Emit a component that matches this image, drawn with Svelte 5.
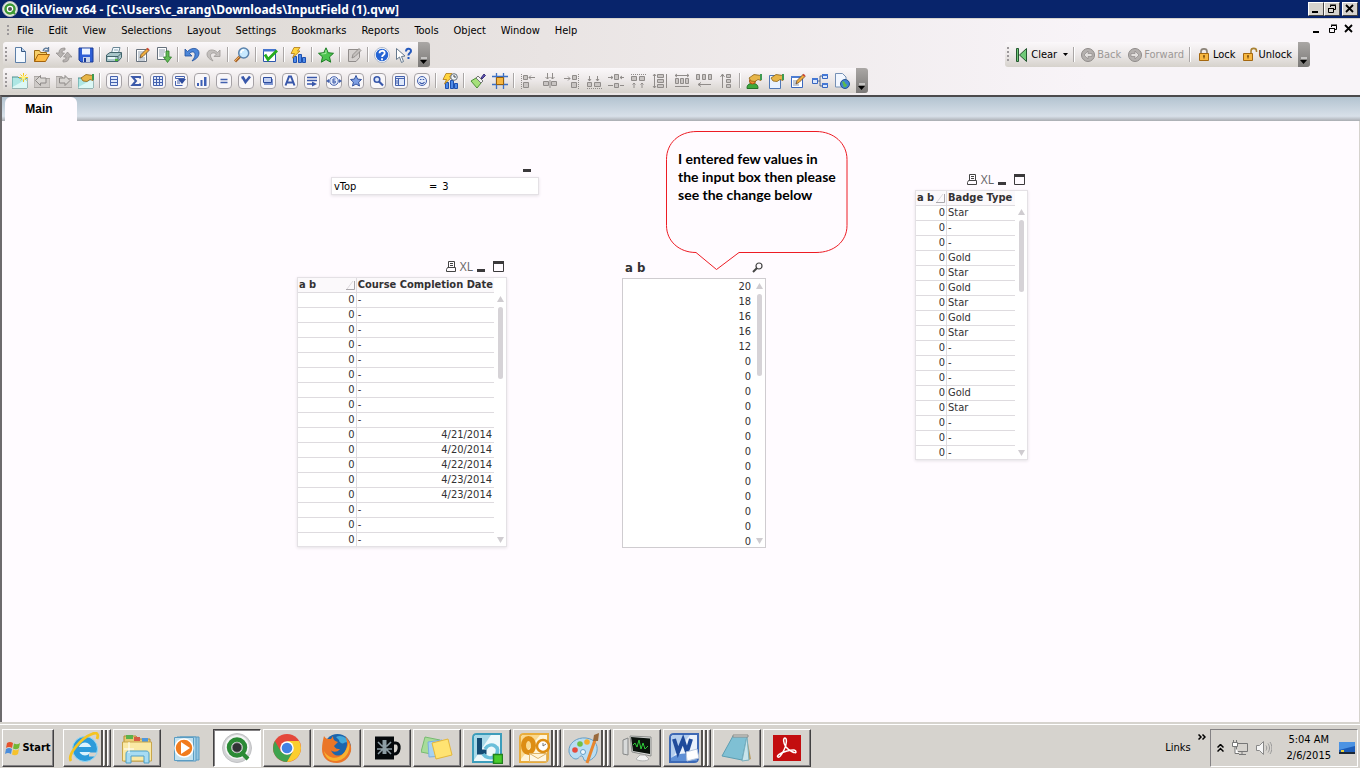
<script>
    const menus = ['File', 'Edit', 'View', 'Selections', 'Layout', 'Settings', 'Bookmarks', 'Reports', 'Tools', 'Object', 'Window', 'Help'];

    // '|' is a separator
    const standardBar = ['new', 'open', 'reload', 'save', '|', 'print', '|', 'script', 'export', '|', 'undo', 'redo', '|', 'search', '|', 'check', '|', 'quickChart', '|', 'star', '|', 'note', '|', 'help', 'whatsThis'];
    const designBar = ['addSheet', 'sheetLeft', 'sheetRight', 'sheetProps', '|',
        'listBox', 'statistics', 'table', 'multiBox', 'chart', 'inputBox', 'selections', 'button', 'text', 'line', 'slider', 'bookmark', 'searchObject', 'container', 'custom', '|',
        'chartWizard', '|', 'painter', 'grid', '|',
        'alignLeft', 'centerH', 'alignRight', 'alignBottom', 'centerV', 'alignTop', 'spaceV', 'spaceH', 'adjustLeft', 'adjustTop', '|',
        'userPrefs', 'docProps', 'editSheet', 'tableViewer', 'webView'];
    const disabled = ['reload', 'redo', 'note', 'sheetLeft', 'sheetRight', 'alignLeft', 'centerH', 'alignRight', 'alignBottom', 'centerV', 'alignTop', 'spaceV', 'spaceH', 'adjustLeft', 'adjustTop'];

    const frame = (inner) => `<rect x=".5" y=".5" width="15" height="15" rx="3.5" fill="#f8f6f8" stroke="#a5a1a5"/>${inner}`;
    const grey = (inner) => `<g fill="#c9c5c3" stroke="#908c8a">${inner}</g>`;
    const bars = '<path d="M3.500 9.500h3v6h-3zM8.500 7.500h3v8h-3zM12.500 10.500h3v5h-3z" fill="#4d8ae8" stroke="#1d4fae"/>';
    const bolt = '<path d="M4 .5h6L7.500 4H10L2.500 11 4.500 6.500H1z" fill="#ffd43e" stroke="#b07a14" stroke-width=".8"/>';
    const hand = '<path d="M3 5 8 1.500l7 1v5l-3-1-3 2-4-.5z" fill="#e7b548" stroke="#8d6314" stroke-width=".8"/><path d="M14 1h2v6h-2z" fill="#3f9a52"/>';
    const pencil = '<path d="m6 11 1-3.500L13 1.500l2 2L9 9.500z" fill="#f0ad3c" stroke="#6a4b2b" stroke-width=".8"/><path d="m12.500 2 1-1.200 2 1.800-1.200 1.200z" fill="#cf4436"/>';

    const icons = {
        new: '<path d="M3.500.5h6l4 4v11h-10z" fill="#f4f9ff" stroke="#5c7fa8"/><path d="M9.500.5v4h4" fill="#b9d2ee" stroke="#34557f"/>',
        open: '<path d="M.5 14.500v-11h5l1 2h6v3" fill="#f6cf6a" stroke="#9c6b14"/><path d="M.5 14.500 4 7.500h11.500l-4 7z" fill="#fdbb45" stroke="#a4630b"/><path d="M9 4c1-3 3-3.500 5-2M14.500 0v4h-4" fill="none" stroke="#5b7899" stroke-width="1.300"/>',
        reload: '<path d="M9 1C4 1 3 3 3 6H0l4.500 4.500L8.500 6H6c0-2 1-3 3-3zM7 15c5 0 6-2 6-5h3l-4.500-5L7.500 10H10c0 2-1 3-3 3z" fill="#b7b3b1" stroke="#918d8b" stroke-width=".7"/>',
        save: '<path d="M1 1h14v14H3l-2-2z" fill="#2f5fd6" stroke="#1b3a94"/><path d="M4 1.500h8v6H4z" fill="#eef4ff"/><path d="M5 10h7v5H5z" fill="#c8d3e8"/><path d="M6 11h2v4H6z" fill="#1b3a94"/>',
        print: '<path d="M5.500 6 7 .5h7L12.500 6" fill="#f5fbff" stroke="#6b8796"/><path d="M8 3h4" stroke="#91a9b8"/><path d="M.5 8 4 5.500h11.500v5L12 14.500H.5z" fill="#a9c5c9" stroke="#42646c"/><path d="M.5 9.500H12V14M12 9.500l3.500-3.500" fill="none" stroke="#42646c"/><path d="M2 11h7" stroke="#e9f6f6" stroke-width="2"/><path d="M9 13h3" stroke="#4cb338" stroke-width="2"/>',
        script: '<path d="M2.500 2.500h10v12h-10z" fill="#fff" stroke="#66717d"/><path d="M4 5h6M4 7h5M4 9h4M4 11h7M4 13h7" stroke="#75859a" stroke-width=".8"/>' + pencil,
        export: '<path d="M1.500.5h9v12h-9z" fill="#fff" stroke="#66717d"/><path d="M3 3h6M3 5h6M3 7h5M3 9h5" stroke="#75859a" stroke-width=".8"/><path d="M10 4h3v6h2.500l-4 5.500-4-5.500H10z" fill="#62bb55" stroke="#2e7c2a" stroke-width=".8"/>',
        undo: '<path d="M1 2v7h7L5.500 6.500C8 4 11 4.500 11 7.500c0 2.500-1 4-3 6.500 5-2 7-5 7-8 0-5-7-6.500-11.500-1.500z" fill="#4c86d8" stroke="#1e4f9e" stroke-width=".8"/>',
        redo: '<path d="M14 3v6.500H8L10.500 7C7.500 5 4.500 6 4.500 8.500c0 2 1 3 2.500 5.500-4-2-6-4-6-7 0-4 6-6 10.500-1.500z" fill="#c3bfbd" stroke="#9c9896" stroke-width=".8"/>',
        search: '<path d="m1 14.500 6-6" stroke="#a8642a" stroke-width="3"/><path d="m1 14 6-6" stroke="#f0b25c"/><circle cx="9.700" cy="6" r="5" fill="#c8e9ff" stroke="#5b83ad" stroke-width="1.500"/><path d="M7 6c0-2 1-3 3-3" stroke="#fff" stroke-width="1.500" fill="none"/>',
        check: '<path d="M1.500 2.500h12v12h-12z" fill="#fff" stroke="#2d56ac"/><path d="M1 2h13v2.500H1z" fill="#4675cf"/><path d="m3 7.500 3 5 9-9" fill="none" stroke="#26ac1d" stroke-width="2.800"/>',
        quickChart: bars + bolt,
        star: '<path d="m8 .8 2.200 4.900 5.300.6-4 3.600 1.200 5.300L8 12.500l-4.700 2.700L4.500 9.900l-4-3.600 5.300-.6z" fill="#4cc34e" stroke="#1c7d24"/><path d="M8 3v3.500L3.500 7" fill="none" stroke="#a5eba0"/>',
        note: '<path d="M2.500 2.500h11v8l-3.500 4H2.500z" fill="#d4d0ce" stroke="#918d8b"/><path d="m6 11 1-3.500 6-6 2 2-6 6z" fill="#c4c0be" stroke="#85817f" stroke-width=".8"/>',
        help: '<circle cx="8" cy="8" r="7" fill="#2564d4" stroke="#fff" stroke-width="1.500"/><circle cx="8" cy="8" r="7.500" fill="none" stroke="#7a8ba8" stroke-width=".6"/><path d="M5.500 6.200C5.500 3 10.700 3 10.700 6c0 2-2.600 2-2.600 4M8 11.200v2" fill="none" stroke="#fff" stroke-width="1.800"/>',
        whatsThis: '<path d="M.5 1.500v11l3-2.500 2 5.500 2-1-2-5 3.500-.5z" fill="#fff" stroke="#65788e"/><path d="M10 4.500C10 1 15 1 15 4c0 2-2.600 2-2.600 4.500M12.500 10v2" fill="none" stroke="#2458bd" stroke-width="2"/>',
        addSheet: '<path d="M0 4h6l1 1h8v10H0z" fill="#aee7e4" stroke="#51908f"/><path d="M.5 14 15 6v9H.5z" fill="#dcf8f5"/><path d="M11.500 0v9M7 4.500h9M8.500 1.500l6 6M14.500 1.500l-6 6" stroke="#f5c81c"/><circle cx="11.500" cy="4.500" r="2" fill="#fff27e"/>',
        sheetLeft: '<path d="M0 3.500h6l1 2h9v9H0z" fill="#cfcbc8" stroke="#aaa6a3"/><path d="m1.500 7.500 5-5V5H12v5H6.500v2.500z" fill="#d9d6d3" stroke="#8d8987"/>',
        sheetRight: '<path d="M0 3.500h6l1 2h9v9H0z" fill="#cfcbc8" stroke="#aaa6a3"/><path d="m14 7.500-5-5V5H3.500v5H9v2.500z" fill="#d9d6d3" stroke="#8d8987"/>',
        sheetProps: '<path d="M0 5h15v10H0z" fill="#aee7e4" stroke="#51908f"/><path d="M.5 14 15 6v9H.5z" fill="#dcf8f5"/>' + hand,
        listBox: frame('<path d="M4.500 3.500h7v9h-7zM4 6.500h8M4 9.500h8" fill="#dfe8fa" stroke="#4562ae"/>'),
        statistics: frame('<path d="M12 5.500V4H4.500L8 8l-3.500 4H12v-1.500" fill="none" stroke="#3c5aaa" stroke-width="2"/>'),
        table: frame('<path d="M3.500 3.500h9v9h-9zM3 6.500h10M3 9.500h10M6.500 3v10M9.500 3v10" fill="#dfe8fa" stroke="#4562ae"/>'),
        multiBox: frame('<path d="M3.500 3.500h9v2h-9zM3.500 8v4.500h7M5 8h3M5 10h3" fill="none" stroke="#4562ae"/><path d="M6 6h8l-4 5z" fill="#2e4c9e"/>'),
        chart: frame('<path d="M3 10h2v3H3zM6.500 7h2v6h-2zM10 4h2.500v9H10z" fill="#3f60b5"/>'),
        inputBox: frame('<path d="M4.500 6.500h7M4.500 9.500h7" stroke="#4260ae" stroke-width="1.600"/>'),
        selections: frame('<path d="M3.500 5 5 4.500 7.500 9 12 3.500" fill="none" stroke="#3857aa" stroke-width="2.600"/>'),
        button: frame('<path d="M4 6h9v6H4z" fill="#7f97d2"/><path d="M3.500 4.500h8v5h-8z" fill="#c5d2f2" stroke="#2e4c9e"/>'),
        text: frame('<path d="M3.500 12.500 7 3.500h2l3.500 9M5 9.500h6" fill="none" stroke="#3857aa" stroke-width="2"/>'),
        line: frame('<path d="M3 4.500h10M3 7.500h10M3 11h6" stroke="#3857aa" stroke-width="1.300"/><path d="m8 8.500 5 2.500-5 2.500z" fill="#3857aa"/>'),
        slider: frame('<circle cx="8" cy="8" r="4.300" fill="#e4ebfa" stroke="#4562ae"/><path d="M0 8l3-2v4zM16 8l-3-2v4z" fill="#4562ae"/><path d="M9.500 6H7v4h2.200V8H7" fill="none" stroke="#3857aa"/>'),
        bookmark: frame('<path d="m8 2.500 1.600 3.600 3.900.4-2.900 2.600.9 3.900L8 11l-3.500 2 .9-3.900-2.900-2.600 3.900-.4z" fill="#7fa0e4" stroke="#35549f"/>'),
        searchObject: frame('<circle cx="7" cy="6.500" r="2.800" fill="#dfe8fa" stroke="#3857aa" stroke-width="1.600"/><path d="m9 8.500 4 4" stroke="#3857aa" stroke-width="2.200"/>'),
        container: frame('<path d="M3.500 3.500h9v9h-9zM3 5.500h10M6.500 5v8M4 8h2M4 10h2" fill="#dfe8fa" stroke="#4562ae"/>'),
        custom: frame('<circle cx="8" cy="8" r="4.500" fill="#e4ebfa" stroke="#4562ae"/><path d="M6 6.500h1.500M8.700 6.500h1.500M5.500 9c1.500 2.200 3.500 2.200 5 0" fill="none" stroke="#3857aa" stroke-width="1.200"/>'),
        chartWizard: bars + bolt + '<circle cx="12" cy="4" r="3.300" fill="#eef4fa" stroke="#68727c"/><path d="M12 2v2h2" fill="none" stroke="#444"/>',
        painter: '<path d="m1 8 5-3 5 5-4 5z" fill="#a6e07a" stroke="#4d9036"/><path d="m6 5 2-2 5 5-2 2z" fill="#f2f2f2" stroke="#777"/><path d="m11 5 3-4 1.500 1.500L12 6z" fill="#5d4fb0" stroke="#3b3379"/>',
        grid: '<path d="M4.500 0v16M11.500 0v16M0 3.500h16M0 11.500h16" stroke="#3b6fc4" stroke-width="1.300"/><path d="M4.500 4.500h7v7h-7z" fill="#f7b740" stroke="#965f0d"/>',
        alignLeft: grey('<path d="M1.500 1v15" stroke-dasharray="1 1"/><path d="M3.500 2.500h4v4h-4zM3.500 9.500h5v5h-5z"/><path d="M9 4.500h6M11 2.500 9 4.500l2 2" fill="none"/>'),
        centerH: grey('<path d="M1.500 8.500h5v4h-5zM9.500 8.500h5v4h-5z"/><path d="M5.500 0v6M10.500 0v6M3.500 4l2 2 2-2M8.500 4l2 2 2-2M8 7v8" fill="none"/>'),
        alignRight: grey('<path d="M14.500 1v15" stroke-dasharray="1 1"/><path d="M8.500 2.500h4v4h-4zM7.500 9.500h5v5h-5z"/><path d="M0 5.500h6M4 3.500l2 2-2 2" fill="none"/>'),
        alignBottom: grey('<path d="M1 15.500h15" stroke-dasharray="1 1"/><path d="M1.500 9.500h4v4h-4zM8.500 9.500h6v4h-6z"/><path d="M3.500 3v5M11.500 3v5M2 6l1.500 2L5 6M10 6l1.500 2L13 6" fill="none"/>'),
        centerV: grey('<path d="M6.500 1.500h4v5h-4zM6.500 10.500h4v4h-4z"/><path d="M0 4.500h5M3 3l2 1.500L3 6M16 4.500h-4M14 3l-2 1.500L14 6M0 12.500h5M16 12.500h-4" fill="none"/>'),
        alignTop: grey('<path d="M1 1.500h15" stroke-dasharray="1 1"/><path d="M1.500 3.500h5v4h-5zM9.500 3.500h5v4h-5z"/><path d="M4 15v-5M12 15v-5M2.500 11.500 4 10l1.500 1.500M10.500 11.500 12 10l1.500 1.500" fill="none"/>'),
        spaceV: grey('<path d="M5.500 1.500h6v3h-6zM5.500 6.500h6v3h-6zM5.500 11.500h6v3h-6z"/><path d="M2.500 1v14M14.500 1v14M1 3l1.500-2L4 3M1 13l1.500 2L4 13" fill="none"/>'),
        spaceH: grey('<path d="M1.500 5.500h3v5h-3zM6.500 5.500h3v5h-3zM11.500 5.500h3v5h-3z"/><path d="M1 2.500h14M1 13.500h14M3 1 1 2.500 3 4M13 1l2 1.500L13 4" fill="none"/>'),
        adjustLeft: grey('<path d="M.5 1.500h3v5h-3zM6.500 1.500h3v5h-3zM12.500 1.500h3v5h-3z"/><path d="M2 11.500h13M5 9.500l-3 2 3 2" fill="none"/>'),
        adjustTop: grey('<path d="M8.500 1.500h4v3h-4zM8.500 6.500h4v3h-4zM8.500 11.500h4v3h-4z"/><path d="M4.500 15V1M2.500 4l2-3 2 3" fill="none"/>'),
        userPrefs: '<path d="M1 15.500c0-4 2-5 5.500-5s5.500 1 5.500 5z" fill="#3fa93c" stroke="#23722a"/><circle cx="6.500" cy="8" r="3" fill="#f08a34" stroke="#a6530f"/>' + hand,
        docProps: '<path d="M1.500 2.500h11v13h-11z" fill="#e8f2ff" stroke="#5078b5"/>' + hand,
        editSheet: '<path d="M1.500 3.500h11v11h-11z" fill="#fff" stroke="#3a68bd"/><path d="M1 3h12v2H1z" fill="#4c7dd2"/><path d="M3 8h5M3 10h4M3 12h6" stroke="#8796ad"/>' + pencil,
        tableViewer: '<path d="M5 8h3V3h3M8 8v5h3" fill="none" stroke="#55698a"/><path d="M.5 5.500h5v5h-5zM10.500 1.500h5v4h-5zM10.500 10.500h5v4h-5z" fill="#d9e7ff" stroke="#3766bf"/><path d="M0 5h6v2H0zM10 1h6v2h-6zM10 10h6v2h-6z" fill="#4578d4"/>',
        webView: '<path d="M1.500.5h7l3.500 3.500v10H1.500z" fill="#f2f7ff" stroke="#7590b5"/><circle cx="11" cy="11" r="4.500" fill="#3f83d3" stroke="#265590"/><path d="M8 9c2-2 3 0 3 1s2 1 2 2-2 3-3 2 0-2-2-5z" fill="#5cba4c"/>',
        clear: '<path d="M2.500 1.500h2v13h-2zM12.500 1.500v13L5.500 8z" fill="#70c978" stroke="#23562f"/>',
        back: '<circle cx="8" cy="8" r="6.500" fill="#b4b0ae" stroke="#8f8b89"/><path d="m4 8 4-4v2.500h4v3H8V12z" fill="#e2dfdd" stroke="#8f8b89" stroke-width=".7"/>',
        forward: '<circle cx="8" cy="8" r="6.500" fill="#b4b0ae" stroke="#8f8b89"/><path d="M12 8 8 4v2.500H4v3h4V12z" fill="#e2dfdd" stroke="#8f8b89" stroke-width=".7"/>',
        lock: '<path d="M5 7V4.500c0-3.500 6-3.500 6 0V7" fill="none" stroke="#8b8378" stroke-width="1.700"/><path d="M3.500 6.500h9v7h-9z" fill="#f7b740" stroke="#a4670f"/><path d="M8 8.500v3M7 9h2" stroke="#6b3f05"/>',
        unlock: '<path d="M9 7V4c0-3.500 5.500-3.500 5.500 0v1" fill="none" stroke="#a98232" stroke-width="1.600"/><path d="M1.500 6.500h9v7h-9z" fill="#f7b740" stroke="#a4670f"/><path d="M6 8.500v3M5 9h2" stroke="#6b3f05"/>',
        qlik: '<circle cx="8" cy="8" r="7.500" fill="#e9ebe9" stroke="#b8bcb8"/><circle cx="8" cy="8" r="4.500" fill="#fff" stroke="#3d9b35" stroke-width="2.500"/><path d="m10 10 3 3" stroke="#3d9b35" stroke-width="2"/><circle cx="8" cy="8" r="2" fill="#555"/>'
    };

    const apps = [
        { name: 'Internet Explorer', stack: true, icon: '<circle cx="17" cy="17" r="9.500" fill="#d9f2fd" stroke="#2c9bda" stroke-width="6"/><path d="M9 17.500h20" stroke="#2c9bda" stroke-width="5"/><path d="M21 20.500h10v4h-10z" fill="#d5d2cc"/><circle cx="17" cy="17" r="12.500" fill="none" stroke="#8fd7f7" stroke-width="1"/><path d="M3 29C-1 23 13 6 24 2c5-2 7 0 5 5" fill="none" stroke="#f5c421" stroke-width="2.800"/>' },
        { name: 'Windows Explorer', icon: '<path d="M3 4h12l2 3h12v22H3z" fill="#e9ca72" stroke="#b08c35"/><path d="M5 3h7v4H5z" fill="#5bb24d"/><path d="M13 5h6v4h-6z" fill="#d75b45"/><path d="M21 6h6v4h-6z" fill="#4f97dc"/><path d="M1.500 10h29v19h-29z" fill="#fae9a5" stroke="#c8a64b"/><path d="M5 31V22c0-2 1-3 3-3h17c2 0 3 1 3 3v9h-5v-7H10v7z" fill="#a7dcf3" stroke="#4f9fc6"/><path d="M8 10v11M3 17h10" stroke="#fff"/>' },
        { name: 'Media Player', flat: true, icon: '<path d="M9 5h19v23H9z" fill="#91c3df" stroke="#5a9cc3"/><path d="M6 5h19v24H6z" fill="#aad4ea" stroke="#5a9cc3"/><path d="M3.500 5.500h19v23h-19z" fill="#c5e2ef" stroke="#5a9cc3"/><circle cx="13" cy="16" r="9" fill="#f17b1d" stroke="#fff" stroke-width="1.500"/><path d="m10 10 9 6-9 6z" fill="#fff"/>' },
        { name: 'QlikView', active: true, icon: '<circle cx="16" cy="16" r="14.500" fill="#d2d3d5" stroke="#c1c2c4"/><circle cx="16" cy="15" r="12" fill="#f4f5f5"/><circle cx="16" cy="15.500" r="8" fill="#f3f5f3" stroke="#2a8a35" stroke-width="4.500"/><path d="m20 20 7 7" stroke="#2a8a35" stroke-width="4"/><circle cx="16" cy="15.500" r="4.800" fill="#303235" stroke="#8b8e90"/>' },
        { name: 'Chrome', icon: '<circle cx="16" cy="16" r="14" fill="#e4483b"/><path d="M3.900 9A14 14 0 0 0 16 30l6-10.500-6 3.500-6.100-3.500z" fill="#3fa34e"/><path d="M16 30A14 14 0 0 0 28.100 9H16l6 10.500z" fill="#fbce2e"/><circle cx="16" cy="16" r="6.800" fill="#fff"/><circle cx="16" cy="16" r="5.300" fill="#4282e4"/>' },
        { name: 'Firefox', icon: '<circle cx="16.500" cy="15.500" r="13.500" fill="#1c65ad"/><path d="M15 5c5-3 12 1 13 6-2-1-4-1-5 0s-5 0-5-3z" fill="#42a8db"/><path d="M3 4c2 3 3 3 7 3l2-3c0 3 1 5 5 6l-4 4c2 3 3 3 6 3-3 4-8 3-9 1 2 7 12 8 15-1 2-5 1-9-1-13 4 4 7 9 6 15-2 8-8 12-14 12C6 31 1 25 1 17c0-5 1-9 2-13z" fill="#eb7628"/><path d="M28 10c2 10-4 19-14 19C8 29 4 25 3 19c4 8 19 13 25-9z" fill="#f8b230"/>' },
        { name: 'Toad', icon: '<path d="M4 4.500h19v23H4z" fill="#05090c"/><path d="M23 11h2c5 0 4 11-2 11" fill="none" stroke="#05090c" stroke-width="3"/><path d="M13.500 8v14" stroke="#8d9da5" stroke-width="4"/><path d="m7 10 4 4h5l4-4M6 17h15M7 22l4-4h5l4 4" fill="none" stroke="#8d9da5" stroke-width="1.600"/>' },
        { name: 'Sticky Notes', icon: '<path d="m4 5 15 3-4 15-15-3z" fill="#a7dc9a" stroke="#78bb71"/><path d="m7 10 14-2 2 16-15 1z" fill="#a5d2f4" stroke="#7cafe0"/><path d="m11 11 16-4 4 16-16 4z" fill="#ffe372" stroke="#e4b73b"/>' },
        { name: 'Lync', icon: '<path d="M2 6c0-3 1-4 4-4h24v24c0 3-1 4-4 4H2z" fill="#eef9fb" stroke="#3c9dbb" stroke-width="2"/><path d="M3 6c0-2 1-3 3-3h14L3 28z" fill="#a8d9e8"/><path d="M8.500 6v14h7" fill="none" stroke="#134b73" stroke-width="5"/><path d="M14 17c6-9 17-1 11 6M26 15c3 11-9 14-14 7" fill="none" stroke="#69bfda" stroke-width="3.500"/><path d="M22.500 22.500h9v9h-9z" fill="#48cc2c" stroke="#21811d" stroke-width="1.500"/>' },
        { name: 'Outlook', stack: true, icon: '<path d="M2 6c0-3 1-4 4-4h24v24c0 3-1 4-4 4H2z" fill="#fff4d8" stroke="#e9ad3c" stroke-width="2"/><path d="M3 6c0-2 1-3 3-3h16L3 27z" fill="#fad98f"/><ellipse cx="10.500" cy="13.500" rx="5" ry="7" fill="none" stroke="#dd8d13" stroke-width="5"/><circle cx="25" cy="14" r="6" fill="#fff" stroke="#dd8d13" stroke-width="2.500"/><path d="M25 11v3l3-2" fill="none" stroke="#777"/><path d="M11.500 21.500h17v8h-17zl8.500 5 8.500-5" fill="#fff8e6" stroke="#dfb467"/>' },
        { name: 'Paint', stack: true, icon: '<path d="M1 20C0 11 9 5 18 6s12 7 11 13-6 10-11 10c-3 0-2-4-4-5s-3 3-6 3-6-3-7-7z" fill="#b9ddf2" stroke="#659ec6"/><circle cx="7" cy="18" r="2.800" fill="#e64a3b"/><circle cx="12" cy="12" r="2.800" fill="#6fbf44"/><circle cx="19" cy="10" r="2.800" fill="#f4ad2a"/><circle cx="15" cy="20" r="2.500" fill="#eef7fc" stroke="#659ec6"/><path d="M19 31 27 8" stroke="#e8862e" stroke-width="3"/><path d="m25 9 1-6 5-2-1 8z" fill="#9a6a3c"/>' },
        { name: 'Remote Desktop', icon: '<path d="m2 8 5-2v17l-5-1z" fill="#d8dada" stroke="#858787"/><path d="m9 4 21 1v19L11 20z" fill="#d9dad8" stroke="#8c8e8c"/><path d="m10 5 19 1.500V22l-17-3z" fill="#0b130d"/><path d="m12 13 2-2 2 4 2-7 2 9 2-6 2 6 3-3" fill="none" stroke="#2dcb37"/><path d="M19 23h5l4 4c-2 3-12 2-13 0z" fill="#f2f3f2" stroke="#b2b3b2"/>' },
        { name: 'Word', stack: true, icon: '<path d="M2 6c0-3 1-4 4-4h24v24c0 3-1 4-4 4H2z" fill="#eaf2fc" stroke="#3d69b5" stroke-width="2"/><path d="M3 6c0-2 1-3 3-3h16L3 27z" fill="#b5cfee"/><path d="M3 26c9-6 18-5 26-2v5H3z" fill="#5f90d6"/><path d="m6 7 4 13 5-12 4 12 4-13" fill="none" stroke="#1f4b9b" stroke-width="4"/><path d="m18 20 11-3 2 9-12 3z" fill="#fff" stroke="#b8c7dd"/>' },
        { name: 'Notepad', icon: '<path d="m26 6 4 21-5 2z" fill="#b89c63"/><path d="M12 4h14l-5 24-20-4z" fill="#7fc0d4" stroke="#5d9eb2"/><path d="M26 4l2 24-7 1z" fill="#c8e5ec" stroke="#79afbf"/><path d="M12 3h15v2H12z" fill="#dbdcd9" stroke="#8b8c89"/>' },
        { name: 'Adobe Reader', icon: '<path d="M2 3h28v26H2z" fill="#c30d0f"/><path d="M7 25c-2-1 2-4 9-6s9-1 9 1-7-1-10-5-3-9-1-9 2 6-1 12-5 8-6 7z" fill="none" stroke="#fff" stroke-width="1.500"/>' }
    ];

    const courseRows = ['-', '-', '-', '-', '-', '-', '-', '-', '-', '4/21/2014', '4/20/2014', '4/22/2014', '4/23/2014', '4/23/2014', '-', '-', '-'];
    const badgeRows = ['Star', '-', '-', 'Gold', 'Star', 'Gold', 'Star', 'Gold', 'Star', '-', '-', '-', 'Gold', 'Star', '-', '-', '-'];
    const listValues = [20, 18, 16, 16, 12, 0, 0, 0, 0, 0, 0, 0, 0, 0, 0, 0, 0, 0];

    let vTop = $state('3');
</script>

{#snippet icon(name)}
    <svg class="icon" viewBox="0 0 16 16" aria-hidden="true">{@html icons[name]}</svg>
{/snippet}

{#snippet toolbar(items, label)}
    <div class="toolbar" role="toolbar" aria-label={label}>
        <span class="grip"></span>
        {#each items as item}
            {#if item === '|'}
                <span class="sep"></span>
            {:else}
                <button class="tool" aria-label={item} disabled={disabled.includes(item)}>{@render icon(item)}</button>
            {/if}
        {/each}
        {@render overflow()}
    </div>
{/snippet}

{#snippet overflow()}
    <button class="overflow" aria-label="Toolbar options">
        <svg width="8" height="8" viewBox="0 0 8 8"><path d="M1 1h6" stroke="#fff" /><path d="M0 3h7L3.500 7z" /></svg>
    </button>
{/snippet}

{#snippet windowGlyphs()}
    <button aria-label="Minimize"><svg viewBox="0 0 10 10"><path d="M1 8h6" stroke="#000" stroke-width="2" /></svg></button>
    <button aria-label="Restore"><svg viewBox="0 0 10 10"><path d="M3.500 3V1.500h5v4H7M3 1h6M1.500 4.500h5v4h-5zM1 4.500h6" fill="none" stroke="#000" /></svg></button>
    <button aria-label="Close"><svg viewBox="0 0 10 10"><path d="m1 1 7 7M8 1 1 8" stroke="#000" stroke-width="1.800" /></svg></button>
{/snippet}

{#snippet captionIcons()}
    <div class="caption-icons">
        <button aria-label="Print"><svg width="10" height="11" viewBox="0 0 10 11"><path d="M2.500 6.500v-6h6v6M4 2.500h3M4 4.500h3M.5 10.500V8.500l1-2h8v4z" fill="none" stroke="#444" /></svg></button>
        <button class="xl">XL</button>
        <button aria-label="Minimize"><svg width="8" height="11" viewBox="0 0 8 11"><path d="M0 8h8v3H0z" fill="#3b393b" /></svg></button>
        <button aria-label="Maximize"><svg width="11" height="11" viewBox="0 0 11 11"><path d="M.5.5h10v10H.5z" fill="none" stroke="#3b393b" /><path d="M0 0h11v3H0z" fill="#3b393b" /></svg></button>
    </div>
{/snippet}

{#snippet scrollbar()}
    <div class="scrollbar" aria-hidden="true">
        <svg width="7" height="6" viewBox="0 0 7 6"><path d="M3.500 0 7 6H0z" fill="#cfccd0" /></svg>
        <span class="thumb"></span>
        <svg width="7" height="6" viewBox="0 0 7 6"><path d="M3.500 6 7 0H0z" fill="#cfccd0" /></svg>
    </div>
{/snippet}

{#snippet tableBox(title, rows)}
    <div class="panel">
        <table>
            <thead>
                <tr>
                    <th class="num">a b<svg width="9" height="9" viewBox="0 0 9 9"><path d="M0 8.500h8.500V0" fill="none" stroke="#aaa7ab" /><path d="M1 8 7 0" stroke="#dcd9dd" /></svg></th>
                    <th>{title}</th>
                </tr>
            </thead>
            <tbody>
                {#each rows as value}
                    <tr>
                        <td class="num">0</td>
                        <td class:date={value.includes('/')}>{value}</td>
                    </tr>
                {/each}
            </tbody>
        </table>
        {@render scrollbar()}
    </div>
{/snippet}

<div class="desktop">
    <header class="title-bar">
        {@render icon('qlik')}
        <h1>QlikView x64 - [C:\Users\c_arang\Downloads\InputField (1).qvw]</h1>
        <div class="window-buttons">{@render windowGlyphs()}</div>
    </header>

    <div class="chrome">
        <nav class="menu-bar">
            <span class="grip"></span>
            {#each menus as menu}
                <button class="menu">{menu}</button>
            {/each}
            <div class="child-buttons">{@render windowGlyphs()}</div>
        </nav>
        <div class="bar-row">
            {@render toolbar(standardBar, 'Standard')}
            <div class="toolbar navigation" role="toolbar" aria-label="Navigation">
                <span class="grip"></span>
                <button class="labelled">{@render icon('clear')}Clear<svg class="drop" width="5" height="3" viewBox="0 0 5 3"><path d="M0 0h5L2.500 3z" /></svg></button>
                <span class="sep"></span>
                <button class="labelled" disabled>{@render icon('back')}Back</button>
                <button class="labelled" disabled>{@render icon('forward')}Forward</button>
                <span class="sep"></span>
                <button class="labelled">{@render icon('lock')}Lock</button>
                <button class="labelled">{@render icon('unlock')}Unlock</button>
                {@render overflow()}
            </div>
        </div>
        <div class="bar-row">
            {@render toolbar(designBar, 'Design')}
        </div>
    </div>

    <div class="tab-strip"><button class="tab">Main</button></div>

    <main class="sheet">
        <section class="object input-object">
            <div class="caption-icons"><button aria-label="Minimize input box"><svg width="8" height="3" viewBox="0 0 8 3"><path d="M0 0h8v3H0z" fill="#3b393b" /></svg></button></div>
            <div class="panel input-row">
                <label for="vtop">vTop</label>
                <span>=</span>
                <input id="vtop" bind:value={vTop} />
            </div>
        </section>

        <section class="object course-object">
            {@render captionIcons()}
            {@render tableBox('Course Completion Date', courseRows)}
        </section>

        <section class="object list-object">
            <header>
                <h2>a b</h2>
                <button aria-label="Search"><svg width="11" height="11" viewBox="0 0 11 11"><circle cx="7" cy="4" r="3" fill="none" stroke="#444" stroke-width="1.200" /><path d="m5 6-4 4" stroke="#444" stroke-width="2" /></svg></button>
            </header>
            <div class="list-box">
                <ul>
                    {#each listValues as value}
                        <li>{value}</li>
                    {/each}
                </ul>
                {@render scrollbar()}
            </div>
        </section>

        <section class="object badge-object">
            {@render captionIcons()}
            {@render tableBox('Badge Type', badgeRows)}
        </section>

        <aside class="object callout">
            <svg width="182" height="140" viewBox="0 0 182 140" aria-hidden="true">
                <path d="M31 .5h119c18 0 31 12 31 28v66c0 16-13 27-31 27H73L50.500 138.500 30 121.500C13 121.500.5 110 .5 94.500v-66C.5 12 13 .5 31 .5z" fill="#fffbff" stroke="#ed1c24" />
            </svg>
            <p>I entered few values in<br />the input box then please<br />see the change below</p>
        </aside>
    </main>

    <footer class="taskbar">
        <button class="task start">
            <svg width="16" height="16" viewBox="0 0 16 16" aria-hidden="true"><path d="M2 3c2-1.500 4-1.500 6 0L7 8C5 6.500 3 6.500 1 8z" fill="#e5532d" /><path d="M9 3.500c2 1 4 1 6-.5l-1 5c-2 1.500-4 1.500-6 .5z" fill="#73b734" /><path d="M1 9c2-1.500 4-1.500 6 0l-1 5c-2-1.500-4-1.500-6 0z" fill="#4a8ddb" /><path d="M8 9.500c2 1 4 1 6-.5l-1 5c-2 1.500-4 1.500-6 .5z" fill="#f6c22c" /></svg>
            Start
        </button>
        <div class="tasks">
            {#each apps as app}
                <button class="task" class:stack={app.stack} class:flat={app.flat} class:active={app.active} aria-label={app.name}>
                    <svg width="32" height="32" viewBox="0 0 32 32">{@html app.icon}</svg>
                    {#if app.stack}<i></i><i></i>{/if}
                </button>
            {/each}
        </div>
        <div class="links">
            <span>Links</span>
            <button aria-label="More links"><svg width="8" height="6" viewBox="0 0 8 6"><path d="m.5.5 2.500 2.500-2.500 2.500M4.500.5 7 3 4.500 5.500" fill="none" stroke="#000" stroke-width="1.500" /></svg></button>
        </div>
        <div class="tray">
            <button aria-label="Show hidden icons"><svg width="7" height="8" viewBox="0 0 7 8"><path d="m.5 3.500 3-3 3 3M.5 7.500l3-3 3 3" fill="none" stroke="#000" stroke-width="1.500" /></svg></button>
            <svg width="16" height="16" viewBox="0 0 16 16"><path d="M4.500 3.500h11v8h-11zM7 14.500h7M10 12v2" fill="#d6d3ce" stroke="#777" /><path d="M.5 2.500h5v4h-5zM1.500 0v2M4.500 0v2M3 7v6.500h4" fill="#fff" stroke="#777" /></svg>
            <svg width="16" height="16" viewBox="0 0 16 16"><path d="M.5 5.500h3l4-4v13l-4-4h-3z" fill="#f5f5f5" stroke="#888" /><path d="M10 5.500c1 1.500 1 3.500 0 5M12 3.500c2 3 2 6 0 9M14 2c2.500 4 2.500 8 0 12" fill="none" stroke="#999" /></svg>
            <time>5:04 AM<br />2/6/2015</time>
            <svg width="16" height="14" viewBox="0 0 16 14"><path d="M0 1h16v11H0z" fill="#1c5cb8" /><path d="M0 1h16v4L0 9z" fill="#4c93e3" /><path d="M0 11h16v2H0z" fill="#1b2736" /><path d="M2 9h3v2H2z" fill="#e9cf3a" /></svg>
        </div>
    </footer>
</div>

<style>
    :global(body) {
        margin: 0;
        background: #fffbff;
    }

    .desktop {
        min-height: 100vh;
        display: flex;
        flex-direction: column;
        font-family: "DejaVu Sans Condensed", "DejaVu Sans", sans-serif;
        font-size: 11px;
        line-height: 15px;
        color: #000;
    }

    button {
        margin: 0;
        padding: 0;
        border: 0;
        background: none;
        font: inherit;
        color: inherit;
        display: flex;
        align-items: center;
        justify-content: center;
    }

    svg {
        display: block;
        flex: none;
    }

    .icon {
        width: 16px;
        height: 16px;
    }

    .title-bar {
        height: 18px;
        padding: 0 2px;
        display: flex;
        align-items: center;
        gap: 2px;
        background: #08246b;
        color: #fff;
        border-bottom: 1px solid #d6d3ce;
    }

    h1 {
        margin: 0;
        flex: 1;
        font-family: "Noto Sans", sans-serif;
        font-size: 12px;
        font-weight: bold;
        white-space: nowrap;
    }

    .window-buttons {
        display: flex;
    }

    .window-buttons button {
        box-sizing: border-box;
        width: 16px;
        height: 14px;
        background: #d6d3ce;
        border: 1px solid;
        border-color: #fff #424142 #424142 #fff;
    }

    .window-buttons button:last-child {
        margin-left: 2px;
    }

    .window-buttons svg,
    .child-buttons svg {
        width: 10px;
        height: 10px;
    }

    .chrome {
        display: flex;
        flex-direction: column;
        background: linear-gradient(90deg, #d9d5cf, #e9e4e3 40%, #f8f4f8 80%);
        padding-bottom: 1px;
    }

    .menu-bar {
        height: 23px;
        padding: 0 6px 0 5px;
        display: flex;
        align-items: center;
    }

    .menu {
        margin-right: 1px;
        padding: 0 7px;
    }

    .child-buttons {
        margin-left: auto;
        display: flex;
        gap: 6px;
        align-self: flex-start;
        padding-top: 5px;
    }

    .grip {
        flex: none;
        width: 2px;
        height: 15px;
        margin: 0 2px;
        background: repeating-linear-gradient(#9c989a 0 2px, transparent 2px 4px);
    }

    .menu-bar .grip {
        height: 11px;
        margin-right: 1px;
    }

    .bar-row {
        display: flex;
        justify-content: space-between;
        padding: 0 50px 1px 3px;
    }

    .toolbar {
        height: 25px;
        display: flex;
        align-items: center;
        border-radius: 3px;
        background: linear-gradient(#fbf8fa, #ece8e8 50%, #d6d2cc);
        overflow: hidden;
    }

    .tool {
        width: 22px;
        height: 22px;
    }

    .sep {
        flex: none;
        width: 1px;
        height: 15px;
        margin: 0 2px;
        background: #aaa6a6;
        border-right: 1px solid #fff;
    }

    .overflow {
        align-self: stretch;
        width: 12px;
        margin-left: 3px;
        align-items: flex-end;
        padding-bottom: 2px;
        background: linear-gradient(#aaa7a5, #7b7977);
    }

    .labelled {
        gap: 1px;
        padding: 0 3px;
    }

    .labelled:disabled {
        color: #9c9896;
    }

    .drop {
        margin-left: 5px;
    }

    .tab-strip {
        height: 24px;
        display: flex;
        align-items: flex-end;
        padding-left: 3px;
        border-top: 2px solid #4b4a4c;
        border-left: 2px solid #6d6b6d;
        background: linear-gradient(#b3c3d0, #d8e0e9 80%, #a9acb1);
    }

    .tab {
        height: 24px;
        width: 72px;
        padding-right: 4px;
        border-radius: 6px 6px 0 0;
        background: #fffbff;
        font-family: "Liberation Sans", sans-serif;
        font-size: 12px;
        font-weight: bold;
    }

    .sheet {
        flex: 1;
        min-height: 460px;
        position: relative;
        border-left: 2px solid #6d6b6d;
        border-right: 1px solid #d6d3ce;
        color: #333133;
    }

    /* sheet objects are placed freely by the document's author */
    .object {
        position: absolute;
    }

    .input-object {
        left: 329px;
        top: 48px;
        width: 208px;
    }

    .course-object {
        left: 295px;
        top: 140px;
        width: 210px;
    }

    .list-object {
        left: 620px;
        top: 140px;
        width: 144px;
    }

    .badge-object {
        left: 913px;
        top: 53px;
        width: 113px;
    }

    .callout {
        left: 664px;
        top: 10px;
        width: 182px;
    }

    .callout p {
        position: absolute;
        inset: 19px auto auto 12px;
        margin: 0;
        font-family: Lato, sans-serif;
        font-size: 14px;
        font-weight: bold;
        line-height: 18px;
        white-space: nowrap;
        color: #000;
    }

    .caption-icons {
        display: flex;
        justify-content: flex-end;
        align-items: center;
        gap: 4px;
        padding: 0 3px 5px 0;
    }

    .caption-icons button:last-child {
        margin-left: 4px;
    }

    .input-object .caption-icons {
        padding-right: 8px;
    }

    .xl {
        font-family: "Open Sans", sans-serif;
        font-size: 12px;
        line-height: 11px;
        color: #666;
    }

    .panel {
        display: flex;
        box-sizing: border-box;
        border: 1px solid #e4e1e5;
        background: #fff;
        box-shadow: 0 1px 3px #e4e1e5;
    }

    .course-object .panel,
    .badge-object .panel {
        height: 270px;
        overflow: hidden;
    }

    .input-row {
        height: 18px;
        align-items: center;
        padding: 0 2px;
        color: #000;
    }

    .input-row label {
        width: 95px;
    }

    .input-row input {
        flex: 1;
        min-width: 0;
        border: 0;
        padding: 0 0 0 5px;
        background: none;
        font: inherit;
        color: inherit;
        outline: 0;
    }

    table {
        flex: 1;
        height: 100%;
        border-collapse: collapse;
        table-layout: fixed;
    }

    th,
    td {
        height: 14px;
        padding: 0 1px;
        border-bottom: 1px solid #dedbdf;
        font-weight: normal;
        line-height: 14px;
        text-align: left;
        white-space: nowrap;
    }

    th {
        background: #fbf9fb;
        font-weight: bold;
    }

    .num {
        width: 56px;
        border-right: 1px solid #dedbdf;
        text-align: right;
    }

    .badge-object .num {
        width: 28px;
    }

    th.num {
        text-align: left;
    }

    th.num svg {
        float: right;
        margin-top: 3px;
    }

    .date {
        padding-right: 2px;
        text-align: right;
    }

    .scrollbar {
        flex: none;
        width: 12px;
        display: flex;
        flex-direction: column;
        align-items: center;
        padding: 18px 0 3px;
    }

    .thumb {
        flex: none;
        width: 5px;
        height: 72px;
        margin: 5px 0 auto;
        border-radius: 3px;
        background: #d6d3d7;
    }

    .list-object header {
        box-sizing: border-box;
        height: 17px;
        padding: 0 3px 4px;
        display: flex;
        align-items: center;
        justify-content: space-between;
    }

    h2 {
        margin: 0;
        font-size: 13px;
        line-height: 15px;
    }

    .list-box {
        display: flex;
        box-sizing: border-box;
        height: 270px;
        border: 1px solid #cfccd0;
        background: #fff;
        overflow: hidden;
    }

    .list-box ul {
        flex: 1;
        margin: 0;
        padding: 0 2px 0 0;
        list-style: none;
        text-align: right;
    }

    .list-box .scrollbar {
        padding-top: 4px;
    }

    .list-box .thumb {
        height: 82px;
    }

    .taskbar {
        box-sizing: border-box;
        display: flex;
        align-items: center;
        gap: 2px;
        height: 46px;
        padding: 3px 2px 0;
        border-top: 2px solid #d6d3ce;
        background: #d6d3ce;
        box-shadow: inset 0 1px #fff;
    }

    .task {
        box-sizing: border-box;
        position: relative;
        width: 48px;
        height: 38px;
        border: 1px solid;
        border-color: #fff #424142 #424142 #fff;
        box-shadow: inset -1px -1px #848284;
    }

    .start {
        width: 52px;
        margin-right: 7px;
        gap: 1px;
        font-weight: bold;
    }

    .tasks {
        display: flex;
        gap: 2px;
        flex: 1;
    }

    .flat {
        border-color: transparent;
        box-shadow: none;
    }

    .active {
        background: #fff;
        border-color: #424142 #fff #fff #424142;
        box-shadow: inset 1px 1px #848284;
    }

    .stack {
        justify-content: flex-start;
        padding-left: 4px;
    }

    .stack i {
        align-self: stretch;
        width: 2px;
        margin-left: 1px;
        border-right: 1px solid #fff;
        background: #55534f;
    }

    .links {
        display: flex;
        gap: 7px;
        padding-right: 2px;
    }

    .links button {
        align-self: flex-start;
        margin-top: -6px;
    }

    .tray {
        box-sizing: border-box;
        height: 38px;
        display: flex;
        align-items: center;
        gap: 8px;
        padding: 0 2px 0 6px;
        border: 1px solid;
        border-color: #848284 #fff #fff #848284;
    }

    time {
        margin-left: 7px;
        text-align: center;
        line-height: 16px;
    }
</style>
